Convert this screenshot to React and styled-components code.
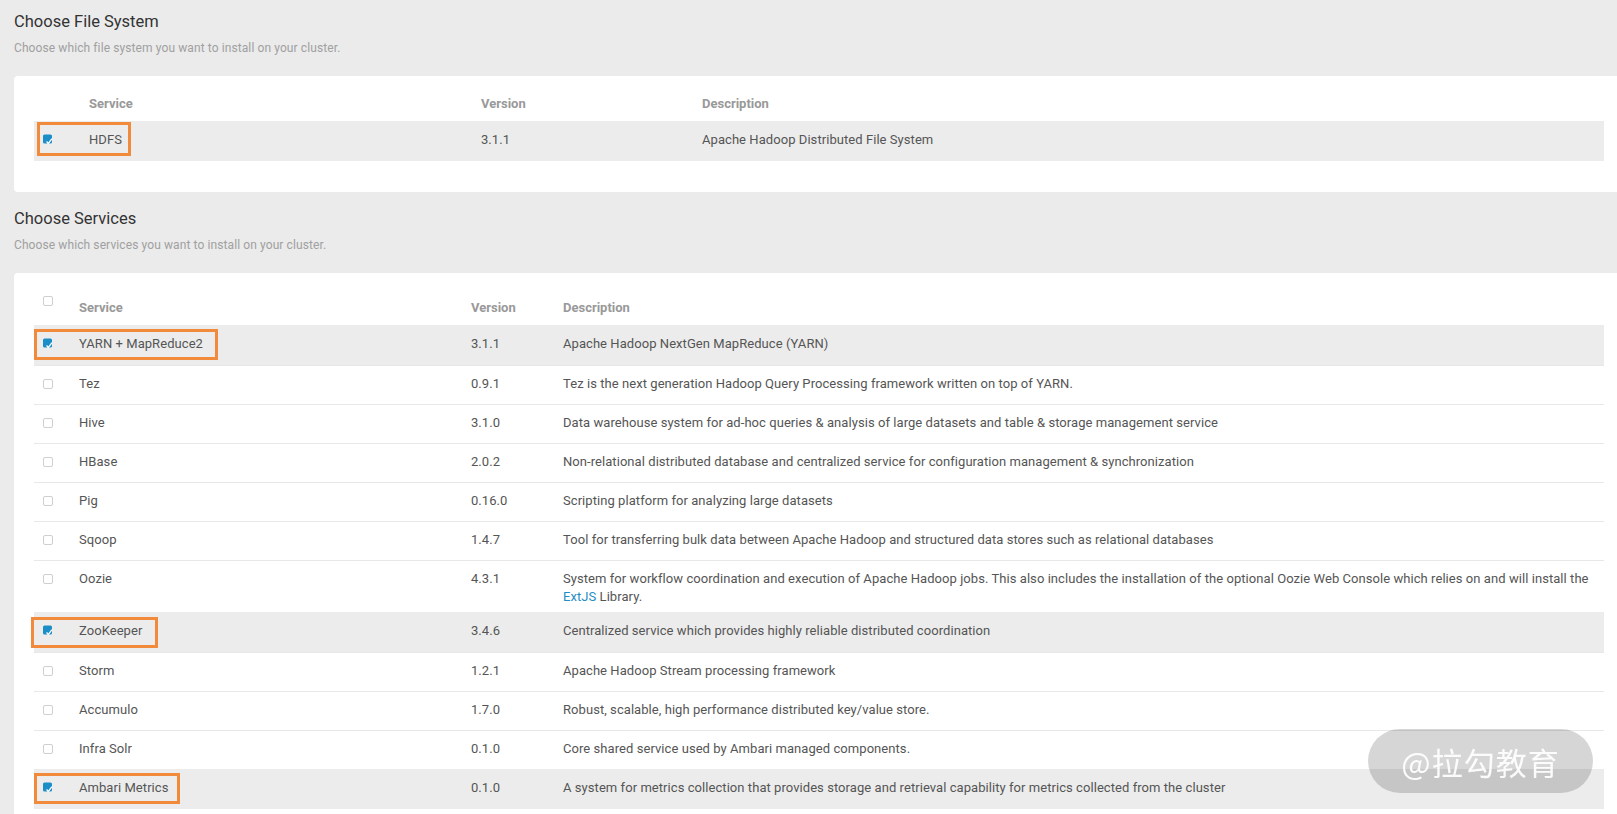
import React from "react";
import styled, { createGlobalStyle } from "styled-components";

const GlobalStyle = createGlobalStyle`
  html, body {
    margin: 0;
    padding: 0;
    background: #ebebeb;
    overflow: hidden;
  }
  body {
    font-family: Roboto, "Liberation Sans", Arial, sans-serif;
  }
`;

const Page = styled.div`
  width: 1624px;
  box-sizing: border-box;
  padding: 12px 0 0 14px;
`;

const Section = styled.section`
  & + & {
    margin-top: 17px;
  }
`;

const Title = styled.h2`
  margin: 0 0 7px;
  font-size: 16.5px;
  line-height: 20px;
  font-weight: 400;
  color: #333;
`;

const Subtitle = styled.p`
  margin: 0 0 19px;
  font-size: 12px;
  line-height: 18px;
  letter-spacing: 0.1px;
  color: #a0a0a0;
`;

const Card = styled.div`
  background: #fff;
  border-radius: 4px;
  padding: 12px 20px ${(p) => p.$bottom}px;
`;

const HeadRow = styled.div`
  display: grid;
  grid-template-columns: ${(p) => p.$cols};
  align-items: end;
  min-height: ${(p) => p.$height}px;
  box-sizing: border-box;
  padding-bottom: 8px;
  font-size: 13px;
  line-height: 18px;
  font-weight: 700;
  color: #999;
`;

const Row = styled.div`
  position: relative;
  display: grid;
  grid-template-columns: ${(p) => p.$cols};
  align-items: start;
  min-height: ${(p) => (p.$selected ? "40px" : "39px")};
  box-sizing: border-box;
  padding: 9px 8px 6px 0;
  border-top: 1px solid ${(p) => (p.$selected ? "#ececec" : "#e8e8e8")};
  background: ${(p) => (p.$selected ? "#ececec" : "transparent")};
  font-size: 13px;
  line-height: 18px;
  letter-spacing: 0.06px;
  color: #555;
`;

const CheckCell = styled.div`
  display: flex;
  align-items: center;
  height: 18px;
  padding-left: 9px;
  margin-bottom: ${(p) => (p.$head ? "7px" : "0")};
`;

const EmptyBox = styled.span`
  display: block;
  width: 10px;
  height: 10px;
  box-sizing: border-box;
  border: 1px solid #cfcfcf;
  border-radius: 2px;
  background: #fff;
`;

const Link = styled.a`
  color: #1f8ec6;
  text-decoration: none;
`;

const Mark = styled.div`
  position: absolute;
  top: ${(p) => p.$box.top}px;
  left: ${(p) => p.$box.left}px;
  width: ${(p) => p.$box.w}px;
  height: ${(p) => p.$box.h}px;
  box-sizing: border-box;
  border: 3px solid #f28a3c;
  pointer-events: none;
`;

const Watermark = styled.div`
  position: fixed;
  right: 24px;
  bottom: 21px;
  width: 225px;
  height: 64px;
  border-radius: 32px;
  background: rgba(0, 0, 0, 0.16);
  color: rgba(255, 255, 255, 0.92);
  display: flex;
  align-items: center;
  justify-content: center;
  font-family: "Noto Sans CJK SC", Roboto, sans-serif;
  font-size: 31px;
  letter-spacing: 1px;
`;

const Checked = () => (
  <svg width="12" height="12" viewBox="0 0 12 12">
    <rect x="0" y="0.5" width="9" height="9" rx="1.5" fill="#1b8dc7" />
    <path d="M3.6 7.4 L5.2 9.6 L9 4.6" fill="none" stroke="#fff" strokeWidth="1.3" />
  </svg>
);

const Checkbox = ({ checked }) => (checked ? <Checked /> : <EmptyBox />);

const fsCols = "55px 392px 221px 1fr";
const svcCols = "45px 392px 92px 1fr";

const fileSystems = [
  {
    name: "HDFS",
    version: "3.1.1",
    desc: "Apache Hadoop Distributed File System",
    checked: true,
    box: { top: 0, left: 3, w: 94, h: 34 },
  },
];

const services = [
  {
    name: "YARN + MapReduce2",
    version: "3.1.1",
    desc: "Apache Hadoop NextGen MapReduce (YARN)",
    checked: true,
    box: { top: 3, left: 0, w: 184, h: 31 },
  },
  {
    name: "Tez",
    version: "0.9.1",
    desc: "Tez is the next generation Hadoop Query Processing framework written on top of YARN.",
  },
  {
    name: "Hive",
    version: "3.1.0",
    desc: "Data warehouse system for ad-hoc queries & analysis of large datasets and table & storage management service",
  },
  {
    name: "HBase",
    version: "2.0.2",
    desc: "Non-relational distributed database and centralized service for configuration management & synchronization",
  },
  { name: "Pig", version: "0.16.0", desc: "Scripting platform for analyzing large datasets" },
  {
    name: "Sqoop",
    version: "1.4.7",
    desc: "Tool for transferring bulk data between Apache Hadoop and structured data stores such as relational databases",
  },
  {
    name: "Oozie",
    version: "4.3.1",
    desc: (
      <>
        System for workflow coordination and execution of Apache Hadoop jobs. This also includes the
        installation of the optional Oozie Web Console which relies on and will install the{" "}
        <Link href="#">ExtJS</Link> Library.
      </>
    ),
  },
  {
    name: "ZooKeeper",
    version: "3.4.6",
    desc: "Centralized service which provides highly reliable distributed coordination",
    checked: true,
    box: { top: 4, left: -3, w: 127, h: 31 },
  },
  { name: "Storm", version: "1.2.1", desc: "Apache Hadoop Stream processing framework" },
  {
    name: "Accumulo",
    version: "1.7.0",
    desc: "Robust, scalable, high performance distributed key/value store.",
  },
  {
    name: "Infra Solr",
    version: "0.1.0",
    desc: "Core shared service used by Ambari managed components.",
  },
  {
    name: "Ambari Metrics",
    version: "0.1.0",
    desc: "A system for metrics collection that provides storage and retrieval capability for metrics collected from the cluster",
    checked: true,
    box: { top: 3, left: 0, w: 146, h: 31 },
  },
];

const ServiceTable = ({ cols, rows, headHeight, selectAll }) => (
  <>
    <HeadRow $cols={cols} $height={headHeight}>
      {selectAll ? (
        <CheckCell $head>
          <EmptyBox />
        </CheckCell>
      ) : (
        <div />
      )}
      <div>Service</div>
      <div>Version</div>
      <div>Description</div>
    </HeadRow>
    {rows.map((r) => (
      <Row key={r.name} $cols={cols} $selected={r.checked}>
        <CheckCell>
          <Checkbox checked={r.checked} />
        </CheckCell>
        <div>{r.name}</div>
        <div>{r.version}</div>
        <div>{r.desc}</div>
        {r.box && <Mark $box={r.box} />}
      </Row>
    ))}
  </>
);

const App = () => (
  <Page>
    <GlobalStyle />
    <Section>
      <Title>Choose File System</Title>
      <Subtitle>Choose which file system you want to install on your cluster.</Subtitle>
      <Card $bottom={31}>
        <ServiceTable cols={fsCols} rows={fileSystems} headHeight={33} />
      </Card>
    </Section>
    <Section>
      <Title>Choose Services</Title>
      <Subtitle>Choose which services you want to install on your cluster.</Subtitle>
      <Card $bottom={30}>
        <ServiceTable cols={svcCols} rows={services} headHeight={40} selectAll />
      </Card>
    </Section>
    <Watermark>@拉勾教育</Watermark>
  </Page>
);

export default App;
